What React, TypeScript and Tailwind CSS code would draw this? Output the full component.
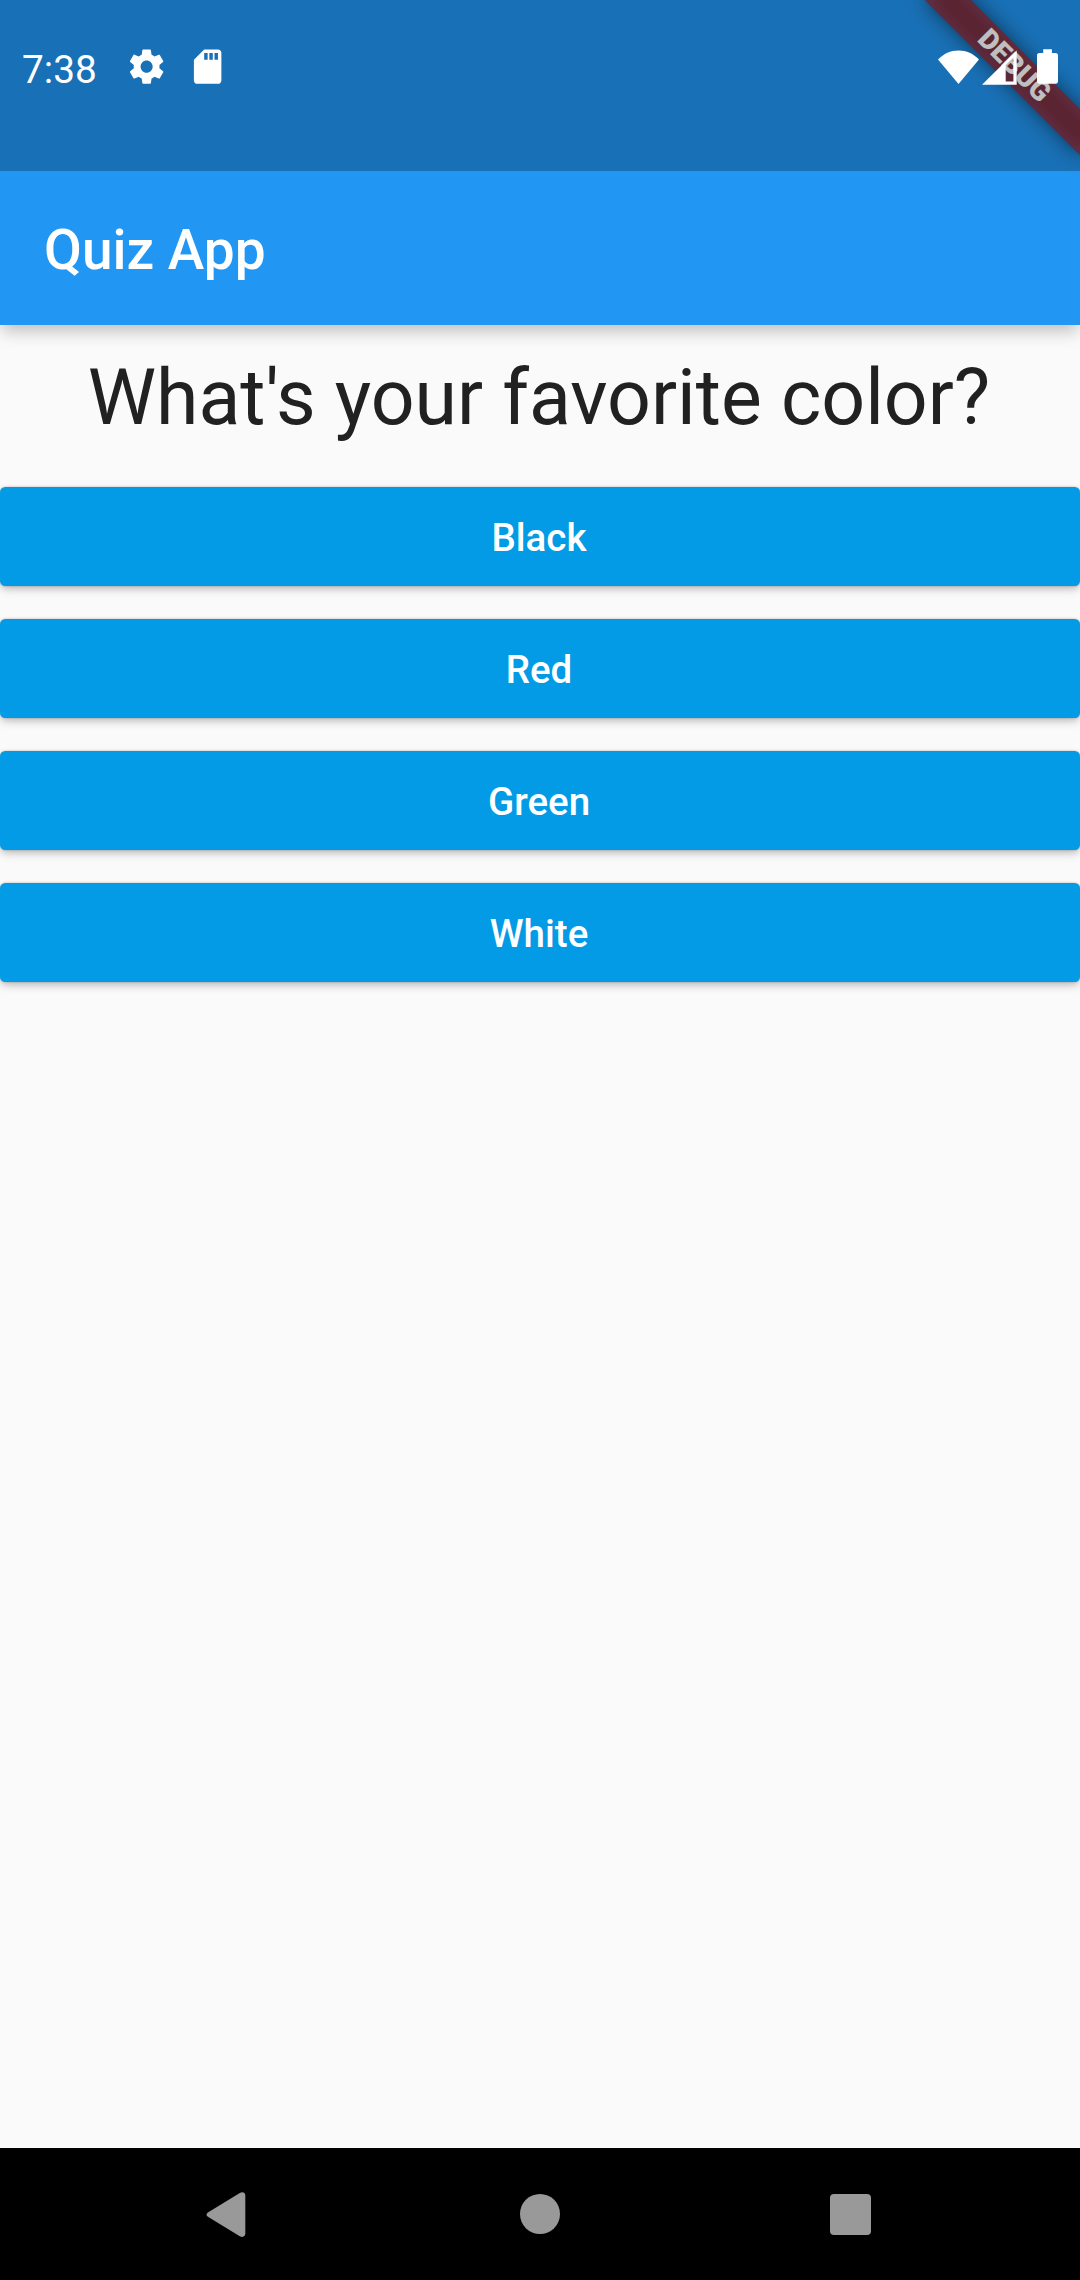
import React from "react";

const answers = ["Black", "Red", "Green", "White"];

function GearIcon() {
  return (
    <svg className="size-[41.25px]" viewBox="0 0 24 24" fill="currentColor">
      <path d="M19.43 12.98c.04-.32.07-.64.07-.98s-.03-.66-.07-.98l2.11-1.65c.19-.15.24-.42.12-.64l-2-3.46c-.12-.22-.39-.3-.61-.22l-2.49 1c-.52-.4-1.08-.73-1.69-.98l-.38-2.65C14.46 2.18 14.25 2 14 2h-4c-.25 0-.46.18-.49.42l-.38 2.65c-.61.25-1.17.59-1.69.98l-2.49-1c-.23-.09-.49 0-.61.22l-2 3.46c-.13.22-.07.49.12.64l2.11 1.65c-.04.32-.07.65-.07.98s.03.66.07.98l-2.11 1.65c-.19.15-.24.42-.12.64l2 3.46c.12.22.39.3.61.22l2.49-1c.52.4 1.08.73 1.69.98l.38 2.65c.03.24.24.42.49.42h4c.25 0 .46-.18.49-.42l.38-2.65c.61-.25 1.17-.59 1.69-.98l2.49 1c.23.09.49 0 .61-.22l2-3.46c.12-.22.07-.49-.12-.64l-2.11-1.65zM12 15.5c-1.93 0-3.5-1.57-3.5-3.5s1.57-3.5 3.5-3.5 3.5 1.57 3.5 3.5-1.57 3.5-3.5 3.5z" />
    </svg>
  );
}

function SdCardIcon() {
  return (
    <svg className="size-[41.25px]" viewBox="0 0 24 24" fill="currentColor">
      <path d="M18 2h-8L4.02 8 4 20c0 1.1.9 2 2 2h12c1.1 0 2-.9 2-2V4c0-1.1-.9-2-2-2zm-6 6h-2V4h2v4zm3 0h-2V4h2v4zm3 0h-2V4h2v4z" />
    </svg>
  );
}

function WifiIcon() {
  return (
    <svg className="h-[36px] w-[41px]" viewBox="0 0 41 36" fill="currentColor">
      <path d="M20.5 35 0 10.6C5.6 4.600 12.600 1.500 20.500 1.500S35.400 4.600 41 10.600z" />
    </svg>
  );
}

function SignalIcon() {
  return (
    <svg className="h-[36px] w-[35px]" viewBox="0 0 35 36" fill="currentColor">
      <path fillRule="evenodd" d="M0 35.700 34.700 1.500V35.700zM23.700 16V32.600H31.400V8.600z" />
    </svg>
  );
}

function BatteryIcon() {
  return (
    <svg className="h-[36px] w-[21px]" viewBox="0 0 21 36" fill="currentColor">
      <path d="M6.200 0.300h8.700v3.700h3.900c1.200 0 2.200 1 2.200 2.200v26.300c0 1.200-1 2.200-2.200 2.200H2.200C1 34.700 0 33.700 0 32.500V6.200C0 5 1 4 2.200 4h4z" />
    </svg>
  );
}

// Diagonal ribbon pinned to the top-right corner, drawn beneath the status bar tint.
function DebugBanner() {
  return (
    <div className="absolute top-0 right-0 size-[220px] overflow-hidden">
      <div className="absolute top-0 left-[110px] h-[110px] w-[220px] origin-top rotate-45 pt-[77px]">
        <div className="relative h-[33px]">
          <div className="absolute inset-0 bg-black/50 blur-[10px]" />
          <div className="relative flex h-full items-center justify-center bg-[#b71c1c]/63 text-[28.05px] leading-none font-black text-white">
            DEBUG
          </div>
        </div>
      </div>
    </div>
  );
}

function StatusBar() {
  return (
    <div className="relative flex h-[171px] items-start justify-between bg-black/25 pr-[22px] pl-[22px] text-white">
      <div className="flex h-[134px] items-center">
        <span className="w-[104px] pt-[6px] text-[38.75px] leading-none">7:38</span>
        <GearIcon />
        <div className="ml-[19.500px] flex">
          <SdCardIcon />
        </div>
      </div>
      <div className="flex pt-[49px]">
        <WifiIcon />
        <div className="ml-[3.300px] flex">
          <SignalIcon />
        </div>
        <div className="ml-[19.700px] flex">
          <BatteryIcon />
        </div>
      </div>
    </div>
  );
}

function NavBar() {
  return (
    <nav className="flex h-[132px] items-center justify-between bg-black px-[189.500px] text-[#999999]">
      <div className="flex size-[80px] items-center justify-center">
        <svg className="size-[80px]" viewBox="0 0 80 80" fill="currentColor">
          <path d="M18.300 38.200 49.800 19c2.600-1.500 5.500-0.600 5.500 2.600v38c0 3.200-2.900 4.100-5.500 2.600L18.300 43c-2.400-1.500-2.400-3.300 0-4.800z" />
        </svg>
      </div>
      <div className="size-[40px] rounded-full bg-[#999999]" />
      <div className="flex size-[80px] items-center justify-center pt-px">
        <div className="size-[41px] rounded-[4px] bg-[#999999]" />
      </div>
    </nav>
  );
}

export default function App() {
  return (
    <div className="flex h-[2280px] w-[1080px] flex-col overflow-hidden bg-[#fafafa] font-['Roboto',sans-serif]">
      <header className="relative h-[325px] bg-[#2196f3] shadow-[0_8px_16px_-2px_rgba(0,0,0,0.24)]">
        <DebugBanner />
        <StatusBar />
        <div className="flex h-[154px] items-center px-[44px] pt-[4px]">
          <h1 className="text-[55px] leading-[64px] font-medium text-white">Quiz App</h1>
        </div>
      </header>
      <main className="flex flex-1 flex-col">
        <p className="my-[27.500px] pr-[2px] text-center text-[77px] leading-[90px] text-[#212121]">
          What's your favorite color?
        </p>
        <div className="flex flex-col gap-[33px] pt-[17.250px]">
          {answers.map((answer) => (
            <button
              key={answer}
              className="h-[99px] w-full rounded-[5.500px] bg-[#039be5] pt-[2px] pr-[2px] text-[38.5px] leading-none font-medium text-white shadow-[0_4px_9px_-1px_rgba(0,0,0,0.26),0_0_2px_rgba(0,0,0,0.3)]"
            >
              {answer}
            </button>
          ))}
        </div>
      </main>
      <NavBar />
    </div>
  );
}
